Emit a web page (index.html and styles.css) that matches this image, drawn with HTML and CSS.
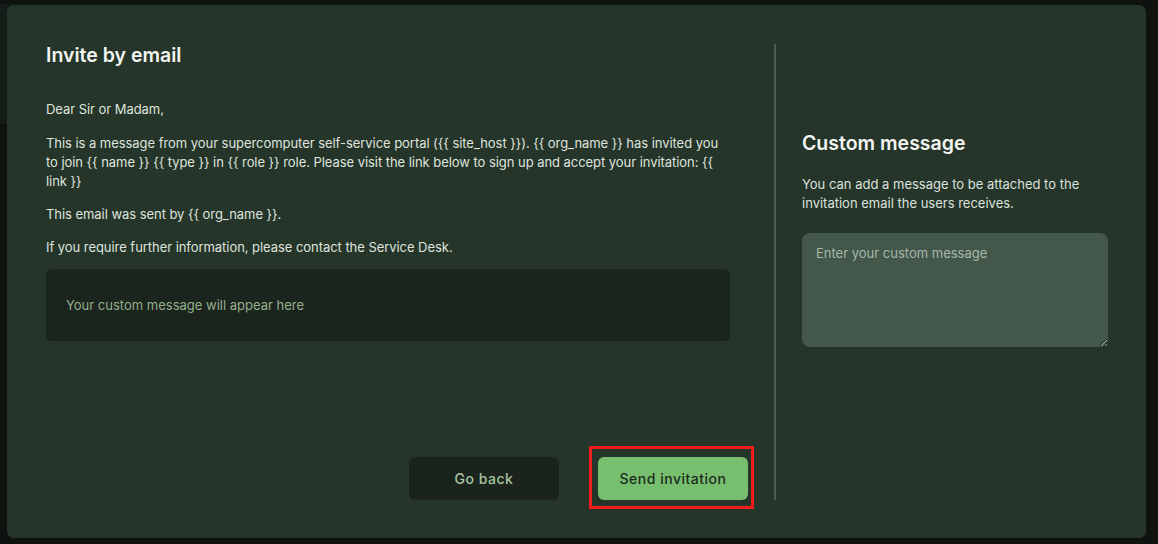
FILE: index.html
```html
<!DOCTYPE html>
<html lang="en">
<head>
<meta charset="utf-8">
<title>Invite by email</title>
<link rel="stylesheet" href="styles.css">
</head>
<body>
<div class="modal">
  <section class="left">
    <h2 class="title">Invite by email</h2>
    <p class="p first">Dear Sir or Madam,</p>
    <p class="p">This is a message from your supercomputer self-service portal ({{ site_host }}). {{ org_name }} has invited you to join {{ name }} {{ type }} in {{ role }} role. Please visit the link below to sign up and accept your invitation: {{ link }}</p>
    <p class="p">This email was sent by {{ org_name }}.</p>
    <p class="p">If you require further information, please contact the Service Desk.</p>
    <div class="preview">Your custom message will appear here</div>
    <div class="actions">
      <button class="btn back">Go back</button>
      <button class="btn send">Send invitation</button>
    </div>
  </section>
  <div class="divider"></div>
  <section class="right">
    <h2 class="title">Custom message</h2>
    <p class="desc">You can add a message to be attached to the invitation email the users receives.</p>
    <textarea class="input" placeholder="Enter your custom message"></textarea>
  </section>
</div>
</body>
</html>
```
FILE: styles.css
```css
* { box-sizing: border-box; }
html, body { margin: 0; height: 100%; }
body {
  padding: 5px 12px 6px 7px;
  background: linear-gradient(#151d18, #151d18) 0 4px / 700px 120px no-repeat, #0e130f;
  font-family: Inter, "Noto Sans", sans-serif;
  color: #dfe4df;
}
.modal {
  height: 533px;
  background: #263529;
  border-radius: 7px;
  padding: 39px 38px 38px 39px;
  display: flex;
}
.left {
  width: 702px;
  display: flex;
  flex-direction: column;
}
.title {
  margin: 0;
  font-size: 19.5px;
  line-height: 22px;
  font-weight: 600;
  color: #f3f5f3;
}
.p {
  margin: 0 0 14px;
  width: 684px;
  font-size: 13px;
  line-height: 19px;
  letter-spacing: -0.05px;
}
.p.first { margin-top: 34px; margin-bottom: 15px; }
.preview {
  width: 684px;
  height: 72px;
  margin-top: -2px;
  background: #1b241d;
  border-radius: 6px;
  display: flex;
  align-items: center;
  padding: 0 20px 1px;
  font-size: 13px;
  color: #93b08b;
}
.actions {
  margin-top: auto;
  display: flex;
  justify-content: flex-end;
  gap: 39px;
}
.btn {
  width: 150px;
  height: 43px;
  border: 0;
  border-radius: 6px;
  font-family: Inter, "Noto Sans", sans-serif;
  font-size: 14px;
  font-weight: 500;
  letter-spacing: 0.5px;
  cursor: pointer;
}
.back { background: #1a231c; color: #a8c5a1; }
.send { background: #77bf6f; color: #1b2a1c; position: relative; }
.send::after {
  content: "";
  position: absolute;
  left: -9px; right: -6px; top: -11px; bottom: -9px;
  border: 3px solid #f21c1c;
}
.divider {
  width: 2px;
  margin: 0 26px;
  background: #4a5c4f;
}
.right {
  width: 306px;
  padding-top: 88px;
}
.desc {
  margin: 21px 0 20px;
  font-size: 13px;
  line-height: 19px;
  color: #dbe1dc;
}
.input {
  display: block;
  width: 306px;
  height: 114px;
  background: #43584a;
  border: 0;
  border-radius: 8px;
  padding: 12px 14px;
  font-family: Inter, "Noto Sans", sans-serif;
  font-size: 13px;
  color: #e6ebe6;
  outline: none;
}
.input::placeholder { color: #a6b7a9; }
```
